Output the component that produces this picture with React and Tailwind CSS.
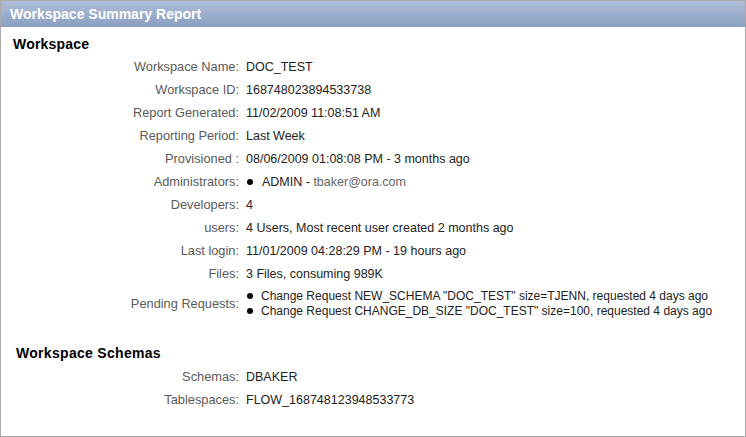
import React from "react";

const workspaceRows = [
  { label: "Workspace Name:", value: "DOC_TEST" },
  { label: "Workspace ID:", value: "168748023894533738" },
  { label: "Report Generated:", value: "11/02/2009 11:08:51 AM" },
  { label: "Reporting Period:", value: "Last Week" },
  { label: "Provisioned :", value: "08/06/2009 01:08:08 PM - 3 months ago" },
  {
    label: "Administrators:",
    value: (
      <span className="flex items-center">
        <span className="w-[6px] h-[6px] rounded-full bg-black ml-[1px] mr-[9px]" />
        ADMIN -&nbsp;<span className="text-[#666]">tbaker@ora.com</span>
      </span>
    ),
  },
  { label: "Developers:", value: "4" },
  { label: "users:", value: "4 Users, Most recent user created 2 months ago" },
  { label: "Last login:", value: "11/01/2009 04:28:29 PM - 19 hours ago" },
  { label: "Files:", value: "3 Files, consuming 989K" },
];

const pending = [
  'Change Request NEW_SCHEMA "DOC_TEST" size=TJENN, requested 4 days ago',
  'Change Request CHANGE_DB_SIZE "DOC_TEST" size=100, requested 4 days ago',
];

const schemaRows = [
  { label: "Schemas:", value: "DBAKER" },
  { label: "Tablespaces:", value: "FLOW_168748123948533773" },
];

const Row = ({ label, value }) => (
  <div className="flex items-center h-[23px]">
    <div className="w-[245px] text-right text-[#5a5a5a] text-[12.8px] pr-[7px] shrink-0">{label}</div>
    <div className="text-[#222]">{value}</div>
  </div>
);

export default function App() {
  return (
    <div
      className="w-[746px] h-[437px] border border-[#a9a9a9] bg-white flex flex-col text-[12.5px]"
      style={{ fontFamily: "Arial, 'Liberation Sans', sans-serif" }}
    >
      <div className="h-[26px] bg-gradient-to-b from-[#afbdd8] to-[#8a9fc1] flex items-center pl-[9px] shrink-0">
        <span className="text-white font-bold text-[14px]">Workspace Summary Report</span>
      </div>

      <div className="pt-[8px]">
        <div className="pl-[12px] h-[18px] flex items-center font-bold text-[14px] tracking-[0.2px] text-black">Workspace</div>
        <div className="mt-[2.5px] flex flex-col">
          {workspaceRows.map((r) => (
            <Row key={r.label} label={r.label} value={r.value} />
          ))}
          <div className="flex items-center h-[36px]">
            <div className="w-[245px] text-right text-[#5a5a5a] text-[12.8px] pr-[7px] shrink-0">Pending Requests:</div>
            <div className="flex flex-col text-[#222] text-[12px] leading-[15px]">
              {pending.map((p) => (
                <span key={p} className="flex items-center">
                  <span className="w-[6px] h-[6px] rounded-full bg-black ml-[1px] mr-[8px]" />
                  {p}
                </span>
              ))}
            </div>
          </div>
        </div>

        <div className="mt-[22.5px] pl-[15px] h-[18px] flex items-center font-bold text-[14px] tracking-[0.3px] text-black">
          Workspace Schemas
        </div>
        <div className="mt-[3.5px] flex flex-col">
          {schemaRows.map((r) => (
            <Row key={r.label} label={r.label} value={r.value} />
          ))}
        </div>
      </div>
    </div>
  );
}
